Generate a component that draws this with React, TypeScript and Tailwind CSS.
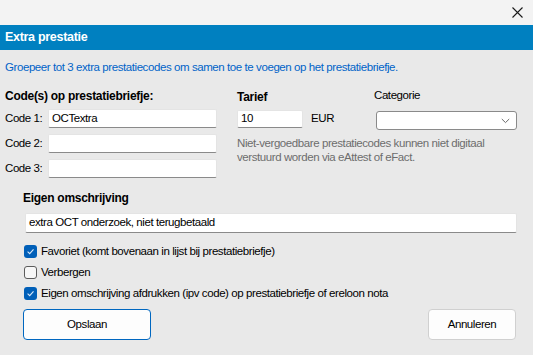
import React from "react";

const font = "font-['Liberation_Sans',Arial,sans-serif]";
const reg = "text-[11.5px] tracking-[-0.42px] text-black";
const bold = "text-[12px] font-bold tracking-[-0.28px] text-black";

function TextBox({ value = "", className = "" }: { value?: string; className?: string }) {
  return (
    <div
      className={`shrink-0 flex items-center bg-white border border-[#e4e4e4] border-b-[#8a8a8a] rounded-[2px] pl-[3px] ${reg} ${className}`}
    >
      {value}
    </div>
  );
}

function Check({ checked, label }: { checked: boolean; label: string }) {
  return (
    <div className="flex items-center h-[21px] shrink-0">
      {checked ? (
        <div className="w-[13px] h-[13px] rounded-[3px] bg-[#005fb8] flex items-center justify-center">
          <svg width="9" height="9" viewBox="0 0 9 9">
            <path d="M1.6 4.7 L3.7 6.7 L7.5 2.3" fill="none" stroke="#d6e8fa" strokeWidth="1.1" />
          </svg>
        </div>
      ) : (
        <div className="w-[13px] h-[13px] rounded-[3px] border border-[#5c5c5c] bg-[#f7f7f7]" />
      )}
      <span className={`ml-[4px] ${reg}`}>{label}</span>
    </div>
  );
}

export default function App() {
  return (
    <div className={`w-[533px] h-[355px] flex flex-col bg-[#e9e9e9] ${font} overflow-hidden`}>
      {/* title bar */}
      <div className="shrink-0 h-[25px] bg-[#f3f3f3] flex items-center justify-end pr-[10px]">
        <svg width="11" height="11" viewBox="0 0 11 11">
          <path d="M0.5 0.5 L10.5 10.5 M10.5 0.5 L0.5 10.5" stroke="#1a1a1a" strokeWidth="1.1" />
        </svg>
      </div>
      {/* header */}
      <div className="shrink-0 h-[25px] bg-[#0080c0] flex items-center pl-[5px] text-white font-bold text-[12.5px] tracking-[-0.3px]">
        Extra prestatie
      </div>
      {/* description */}
      <div className={`shrink-0 h-[36px] flex items-center pl-[5px] text-[11.5px] tracking-[-0.42px] text-[#0063c8]`}>
        Groepeer tot 3 extra prestatiecodes om samen toe te voegen op het prestatiebriefje.
      </div>
      {/* main row */}
      <div className="shrink-0 flex">
        <div className="w-[217px] pl-[5px] shrink-0">
          <div className={`h-[20px] flex items-center ${bold}`}>Code(s) op prestatiebriefje:</div>
          <div className="flex flex-col gap-[6px] mt-[3px]">
            {[
              ["Code 1:", "OCTextra"],
              ["Code 2:", ""],
              ["Code 3:", ""],
            ].map(([l, v]) => (
              <div key={l} className="flex items-center">
                <span className={`w-[43px] shrink-0 whitespace-nowrap ${reg}`}>{l}</span>
                <TextBox value={v} className="w-[169px] h-[19px]" />
              </div>
            ))}
          </div>
        </div>
        <div className="ml-[20px] w-[139px] shrink-0">
          <div className={`h-[20px] mt-[1px] flex items-center ${bold}`}>Tarief</div>
          <div className="flex items-center mt-[3px]">
            <TextBox value="10" className="w-[66px] h-[18px]" />
            <span className={`ml-[8px] ${reg}`}>EUR</span>
          </div>
          <div className="mt-[8px] w-[290px] text-[11.5px] tracking-[-0.42px] leading-[14px] text-[#6d6d6d]">
            <div>Niet-vergoedbare prestatiecodes kunnen niet digitaal</div>
            <div>verstuurd worden via eAttest of eFact.</div>
          </div>
        </div>
        <div className="w-[141px] shrink-0">
          <div className={`h-[20px] flex items-center -ml-[2px] ${reg}`}>Categorie</div>
          <div className="mt-[5px] h-[19px] bg-white border border-[#8a8a8a] rounded-[3px] flex items-center justify-end pr-[6px]">
            <svg width="9" height="6" viewBox="0 0 9 6">
              <path d="M0.8 1 L4.5 4.6 L8.2 1" fill="none" stroke="#6a6a6a" strokeWidth="1" />
            </svg>
          </div>
        </div>
      </div>
      {/* Eigen omschrijving */}
      <div className="shrink-0 pl-[23px] mt-[10px]">
        <div className={`h-[20px] flex items-center ${bold}`}>Eigen omschrijving</div>
        <TextBox value="extra OCT onderzoek, niet terugbetaald" className="mt-[5px] ml-[2px] w-[492px] h-[20px]" />
        <div className="mt-[8px] pl-[1px] flex flex-col">
          <Check checked label="Favoriet (komt bovenaan in lijst bij prestatiebriefje)" />
          <Check checked={false} label="Verbergen" />
          <Check checked label="Eigen omschrijving afdrukken (ipv code) op prestatiebriefje of ereloon nota" />
        </div>
      </div>
      {/* buttons */}
      <div className="shrink-0 flex justify-between pl-[23px] pr-[17px] mt-[5px]">
        <div className={`w-[128px] h-[31px] bg-[#fdfdfd] border border-[#0067c0] rounded-[4px] flex items-center justify-center ${reg}`}>
          Opslaan
        </div>
        <div className={`w-[88px] h-[31px] bg-[#fdfdfd] border border-[#d0d0d0] rounded-[4px] flex items-center justify-center ${reg}`}>
          Annuleren
        </div>
      </div>
    </div>
  );
}
